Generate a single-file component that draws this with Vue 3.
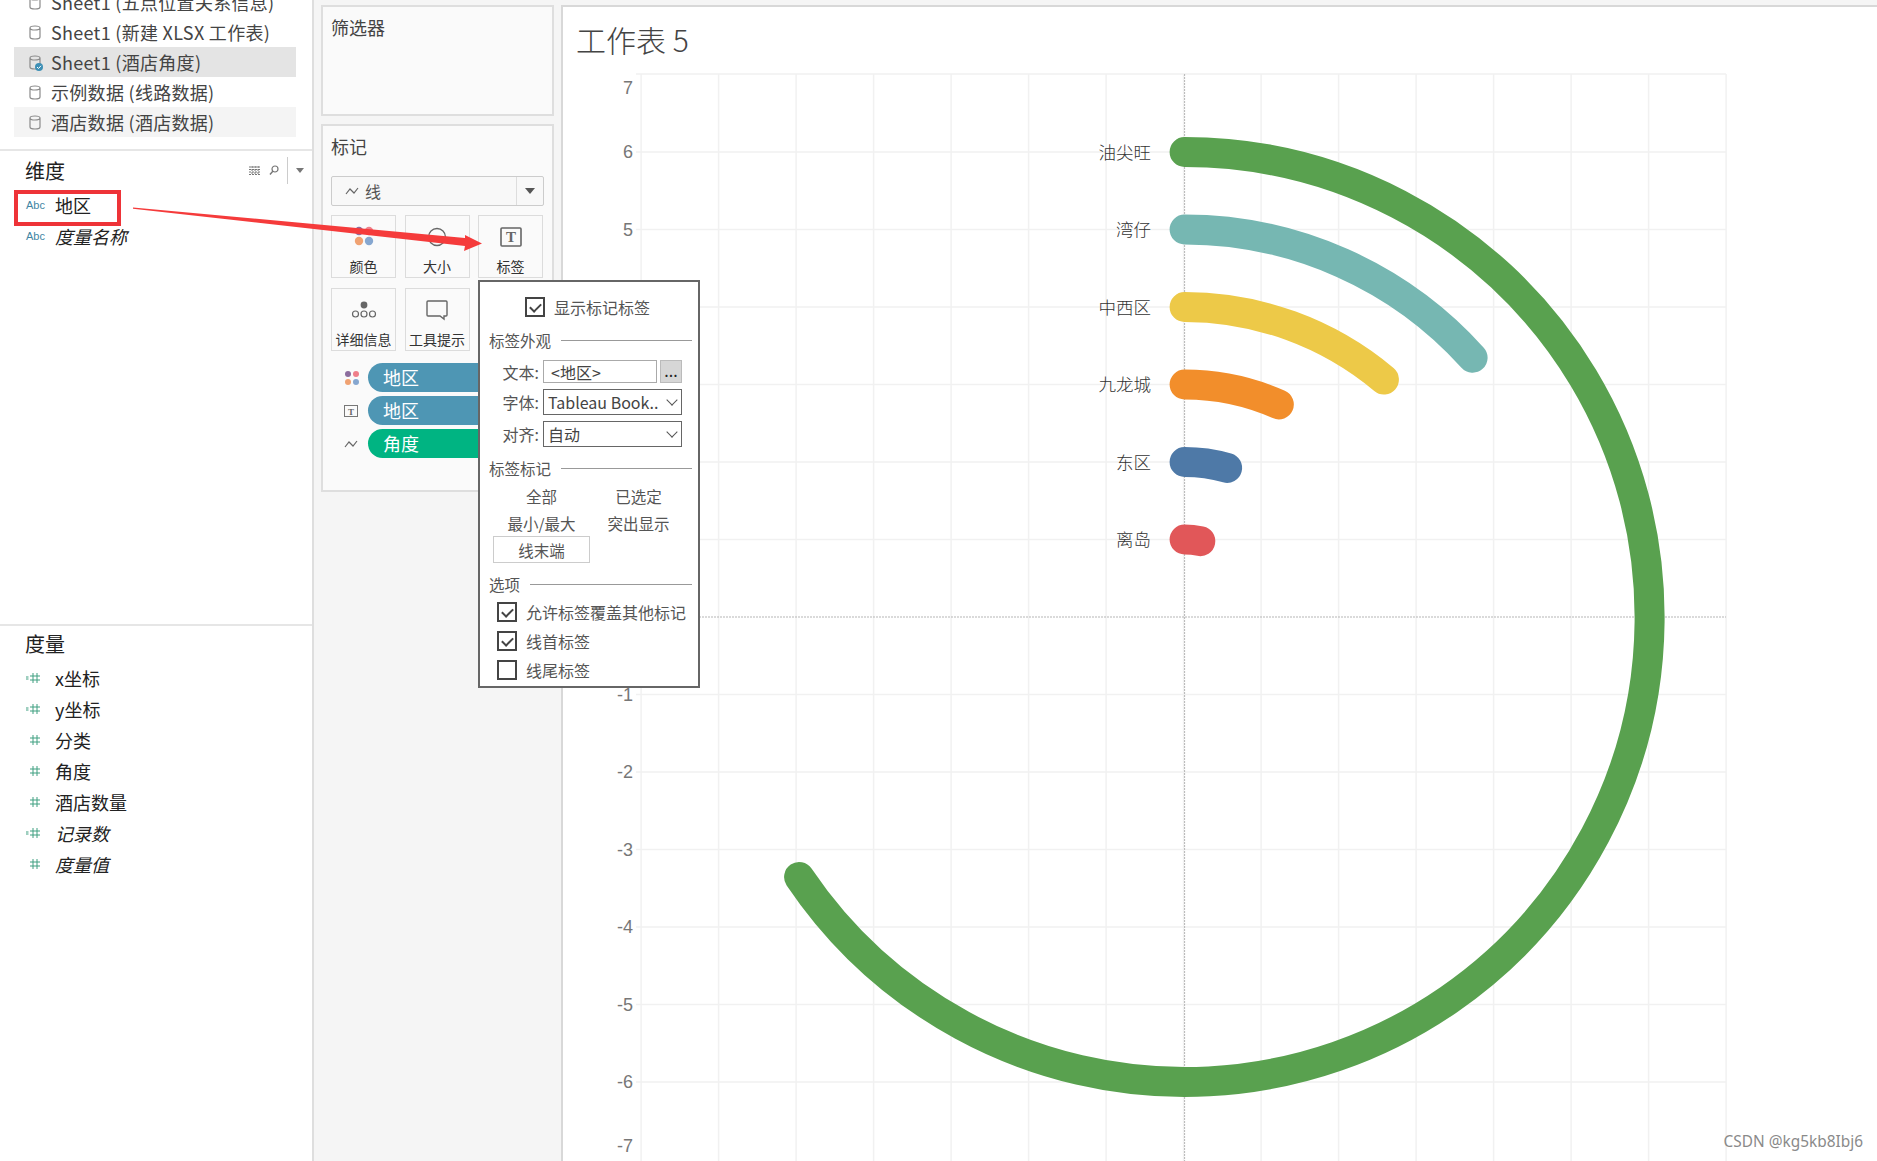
<script setup>
  const sources = [
    { name: 'Sheet1 (五点位置关系信息)' },
    { name: 'Sheet1 (新建 XLSX 工作表)' },
    { name: 'Sheet1 (酒店角度)', state: 'active' },
    { name: '示例数据 (线路数据)' },
    { name: '酒店数据 (酒店数据)', state: 'hover' },
  ]

  const measures = [
    { name: 'x坐标', calc: true },
    { name: 'y坐标', calc: true },
    { name: '分类' },
    { name: '角度' },
    { name: '酒店数量' },
    { name: '记录数', calc: true, italic: true },
    { name: '度量值', italic: true },
  ]

  // chart geometry, in page pixels
  const cx = 1184.6
  const cy = 617
  const unit = 77.5
  const originX = 563
  const originY = 67

  const yTicks = []
  for (let v = 7; v >= -7; v--) yTicks.push(v)
  const xLines = []
  for (let i = 0; i < 15; i++) xLines.push(641.1 + i * unit)

  const tickY = v => cy - v * unit
  // the two outer labels are pushed inside the plot area
  const tickLabelY = v => (v === 7 ? 88 : v === -7 ? 1146 : tickY(v))

  const arcs = [
    { label: '油尖旺', r: 6, angle: 236, color: '#59a14f' },
    { label: '湾仔', r: 5, angle: 48, color: '#76b7b2' },
    { label: '中西区', r: 4, angle: 40, color: '#edc948' },
    { label: '九龙城', r: 3, angle: 23.9, color: '#f28e2b' },
    { label: '东区', r: 2, angle: 15.9, color: '#4e79a7' },
    { label: '离岛', r: 1, angle: 11.7, color: '#e15759' },
  ].map(a => {
    const R = a.r * unit
    const rad = (a.angle * Math.PI) / 180
    const ex = cx + R * Math.sin(rad)
    const ey = cy - R * Math.cos(rad)
    const large = a.angle > 180 ? 1 : 0
    return {
      ...a,
      y: cy - R,
      d: `M${cx} ${cy - R}A${R} ${R} 0 ${large} 1 ${ex.toFixed(1)} ${ey.toFixed(1)}`,
    }
  })
</script>

<template>
  <div class="app">
    <aside class="sidebar">
      <ul class="sources">
        <li v-for="s in sources" :key="s.name" class="source" :class="s.state">
          <svg class="db" width="12" height="15" viewBox="0 0 12 15">
            <path d="M1 3v9c0 1.2 2 2 5 2s5-.8 5-2V3M1 3c0-1.2 2-2 5-2s5 .8 5 2-2 2-5 2-5-.8-5-2z" fill="none" stroke="#8a8a8a" stroke-width="1.2" />
            <template v-if="s.state === 'active'">
              <circle cx="10" cy="12" r="4" fill="#3d8fb5" />
              <path d="M8 12l1.5 1.5L12 10.8" fill="none" stroke="#fff" stroke-width="1" />
            </template>
          </svg>
          <span>{{ s.name }}</span>
        </li>
      </ul>

      <section class="fields dims">
        <header class="fields-head">
          <h3>维度</h3>
          <div class="tools">
            <svg width="12" height="9" viewBox="0 0 12 9">
              <path d="M0 1h12M0 3.5h12M0 6h12M0 8.5h12M3 0v9M6 0v9M9 0v9" stroke="#777" stroke-width="1" stroke-dasharray="2 1" fill="none" />
            </svg>
            <svg width="10" height="10" viewBox="0 0 10 10">
              <circle cx="6" cy="4" r="3" fill="none" stroke="#777" stroke-width="1.2" />
              <path d="M4 6L1 9.5" stroke="#777" stroke-width="1.4" />
            </svg>
            <i class="tool-sep"></i>
            <i class="tool-caret"></i>
          </div>
        </header>
        <div class="field"><span class="abc">Abc</span><span>地区</span></div>
        <div class="field"><span class="abc">Abc</span><em>度量名称</em></div>
        <div class="red-box"></div>
      </section>

      <section class="fields measures">
        <header class="fields-head"><h3>度量</h3></header>
        <div v-for="m in measures" :key="m.name" class="field">
          <svg class="hash" width="16" height="12" viewBox="0 0 16 12">
            <path v-if="m.calc" d="M0 5h2.5M0 7h2.5" stroke="#3f9f80" stroke-width="1" />
            <path d="M7 1v10M11 1v10M4 4h10M4 8h10" stroke="#3f9f80" stroke-width="1" />
          </svg>
          <em v-if="m.italic">{{ m.name }}</em>
          <span v-else>{{ m.name }}</span>
        </div>
      </section>
    </aside>

    <div class="shelves">
      <section class="card filters"><h4>筛选器</h4></section>
      <section class="card marks">
        <h4>标记</h4>
        <div class="mark-type">
          <svg width="14" height="10" viewBox="0 0 14 10">
            <path d="M1 8l4-5 4 4 4-5" fill="none" stroke="#666" stroke-width="1.2" />
          </svg>
          <span>线</span>
          <i class="type-caret"></i>
        </div>
        <div class="mark-grid">
          <div class="mark-btn">
            <svg width="30" height="30" viewBox="0 0 30 30">
              <circle cx="10" cy="9" r="4.2" fill="#8c6d9e" />
              <circle cx="20" cy="9" r="4.2" fill="#ef7f8a" />
              <circle cx="10" cy="19" r="4.2" fill="#f0a272" />
              <circle cx="20" cy="19" r="4.2" fill="#86a7d0" />
            </svg>
            <span>颜色</span>
          </div>
          <div class="mark-btn">
            <svg width="30" height="30" viewBox="0 0 30 30">
              <circle cx="15" cy="15" r="8.5" fill="none" stroke="#666" stroke-width="1.3" />
            </svg>
            <span>大小</span>
          </div>
          <div class="mark-btn">
            <svg width="30" height="30" viewBox="0 0 30 30">
              <rect x="5" y="6" width="20" height="18" rx="1" fill="none" stroke="#666" stroke-width="1.6" />
              <text x="15" y="20" text-anchor="middle" class="t-glyph">T</text>
            </svg>
            <span>标签</span>
          </div>
          <div class="mark-btn">
            <svg width="30" height="30" viewBox="0 0 30 30">
              <circle cx="15" cy="10" r="3.4" fill="#666" />
              <circle cx="6.5" cy="19" r="3" fill="none" stroke="#666" stroke-width="1.2" />
              <circle cx="15" cy="19" r="3" fill="none" stroke="#666" stroke-width="1.2" />
              <circle cx="23.5" cy="19" r="3" fill="none" stroke="#666" stroke-width="1.2" />
            </svg>
            <span class="small">详细信息</span>
          </div>
          <div class="mark-btn">
            <svg width="30" height="30" viewBox="0 0 30 30">
              <path d="M6 6h18a1 1 0 0 1 1 1v13a1 1 0 0 1-1 1h-2v3l-4-3H6a1 1 0 0 1-1-1V7a1 1 0 0 1 1-1z" fill="none" stroke="#666" stroke-width="1.4" />
            </svg>
            <span class="small">工具提示</span>
          </div>
        </div>
        <div class="pill-row">
          <svg width="16" height="16" viewBox="0 0 16 16">
            <circle cx="4" cy="4" r="3" fill="#8c6d9e" />
            <circle cx="12" cy="4" r="3" fill="#ef7f8a" />
            <circle cx="4" cy="12" r="3" fill="#f0a272" />
            <circle cx="12" cy="12" r="3" fill="#86a7d0" />
          </svg>
          <span class="pill blue">地区</span>
        </div>
        <div class="pill-row">
          <svg width="14" height="12" viewBox="0 0 14 12">
            <rect x=".5" y=".5" width="13" height="11" fill="none" stroke="#777" />
            <text x="7" y="9.5" text-anchor="middle" class="t-small">T</text>
          </svg>
          <span class="pill blue">地区</span>
        </div>
        <div class="pill-row">
          <svg width="14" height="10" viewBox="0 0 14 10">
            <path d="M1 8l4-5 4 4 4-5" fill="none" stroke="#666" stroke-width="1.2" />
          </svg>
          <span class="pill green">角度</span>
        </div>
      </section>
    </div>

    <main class="sheet">
      <h1 class="sheet-title">工作表 5</h1>
      <svg class="chart" width="1314" height="1094" viewBox="0 0 1314 1094">
        <g :transform="`translate(${-originX} ${-originY})`">
          <line v-for="x in xLines" :key="x" :x1="x" :x2="x" y1="74" y2="1161" class="grid" />
          <line x1="636" x2="1726" y1="74" y2="74" class="grid" />
          <template v-for="v in yTicks" :key="v">
            <line v-if="Math.abs(v) < 7" x1="636" x2="1726" :y1="tickY(v)" :y2="tickY(v)" :class="v === 0 ? 'zero' : 'grid'" />
            <text x="633" :y="tickLabelY(v)" class="tick">{{ v }}</text>
          </template>
          <line :x1="cx" :x2="cx" y1="74" y2="1161" class="zero" />
          <g v-for="a in arcs" :key="a.label">
            <path :d="a.d" fill="none" :stroke="a.color" stroke-width="30" stroke-linecap="round" />
            <text x="1151" :y="a.y - 1" class="arc-label">{{ a.label }}</text>
          </g>
        </g>
      </svg>
      <span class="watermark">CSDN @kg5kb8Ibj6</span>
    </main>

    <!-- popup of the label card -->
    <div class="popup">
      <label class="check head-check"><i class="box on"></i>显示标记标签</label>
      <div class="legend"><span>标签外观</span></div>
      <div class="form">
        <span>文本:</span>
        <div class="text-row">
          <div class="input">&lt;地区&gt;</div>
          <div class="more">...</div>
        </div>
        <span>字体:</span>
        <div class="select">Tableau Book..<i class="chev"></i></div>
        <span>对齐:</span>
        <div class="select">自动<i class="chev"></i></div>
      </div>
      <div class="legend second"><span>标签标记</span></div>
      <div class="scope">
        <span>全部</span><span>已选定</span>
        <span>最小/最大</span><span>突出显示</span>
        <span class="scope-on">线末端</span>
      </div>
      <div class="legend third"><span>选项</span></div>
      <div class="checks">
        <label class="check"><i class="box on"></i>允许标签覆盖其他标记</label>
        <label class="check"><i class="box on"></i>线首标签</label>
        <label class="check"><i class="box"></i>线尾标签</label>
      </div>
    </div>

    <svg class="arrow" width="360" height="60" viewBox="125 200 360 60">
      <polygon points="133,207.5 465,238 465,235 482,243.5 464,251 465,246 133,208.8" fill="#f53b3b" />
    </svg>
  </div>
</template>

<style>
  html,
  body {
    margin: 0;
    background: #f5f5f5;
  }
</style>

<style scoped>
  .app {
    position: relative;
    display: flex;
    width: 1877px;
    height: 1161px;
    overflow: hidden;
    background: #f5f5f5;
    color: #333;
    font-family: "Noto Sans CJK SC", "Noto Sans", sans-serif;
  }

  /* left data pane */
  .sidebar {
    flex: none;
    width: 312px;
    background: #fff;
    border-right: 2px solid #dedede;
  }
  .sources {
    height: 149px;
    margin: 0;
    padding: 0;
    list-style: none;
    border-bottom: 2px solid #e6e6e6;
    box-sizing: content-box;
    overflow: hidden;
  }
  .source {
    display: flex;
    align-items: center;
    gap: 10px;
    box-sizing: border-box;
    width: 282px;
    height: 30px;
    margin-left: 14px;
    padding-left: 15px;
    font-size: 18px;
    letter-spacing: .3px;
    color: #444;
    white-space: nowrap;
  }
  .source:first-child {
    margin-top: -13px;
  }
  .source.active {
    background: #e4e4e4;
  }
  .source.hover {
    background: #f4f4f4;
  }
  .db {
    flex: none;
    overflow: visible;
  }

  .fields {
    position: relative;
  }
  .dims {
    height: 473px;
    border-bottom: 2px solid #e6e6e6;
  }
  .fields-head {
    display: flex;
    align-items: center;
    justify-content: space-between;
    height: 38px;
    padding: 0 8px 0 25px;
  }
  .measures .fields-head {
    height: 34px;
    margin-bottom: 2px;
  }
  h3 {
    margin: 0;
    font-size: 20px;
    font-weight: 400;
    color: #222;
  }
  .tools {
    display: flex;
    align-items: center;
    gap: 8px;
  }
  .tool-sep {
    width: 1px;
    height: 27px;
    background: #ccc;
  }
  .tool-caret {
    border: 4px solid transparent;
    border-top: 5px solid #777;
    border-bottom: 0;
  }
  .field {
    display: flex;
    align-items: center;
    height: 31px;
    padding-left: 26px;
    font-size: 18px;
    color: #222;
  }
  .field em {
    font-style: italic;
  }
  .abc {
    width: 29px;
    flex: none;
    font-family: "Liberation Sans", sans-serif;
    font-size: 11px;
    color: #3f86a4;
  }
  .hash {
    flex: none;
    width: 16px;
    margin-right: 13px;
  }
  .red-box {
    position: absolute;
    left: 14px;
    top: 39px;
    box-sizing: border-box;
    width: 107px;
    height: 36px;
    border: 4px solid #ee3338;
  }

  /* filters + marks */
  .shelves {
    flex: none;
    width: 247px;
    padding: 5px 0 0 7px;
    box-sizing: border-box;
  }
  .card {
    box-sizing: border-box;
    width: 233px;
    background: #fafafa;
    border: 2px solid #dedede;
  }
  .card h4 {
    margin: 0;
    font-size: 18px;
    font-weight: 400;
    color: #444;
  }
  .filters {
    height: 111px;
    padding: 7px 8px;
  }
  .marks {
    position: relative;
    height: 368px;
    margin-top: 8px;
    padding: 7px 8px;
  }
  .mark-type {
    display: flex;
    align-items: center;
    gap: 6px;
    box-sizing: border-box;
    height: 30px;
    margin-top: 17px;
    padding-left: 13px;
    background: #f8f8f8;
    border: 1px solid #ccc;
    border-radius: 2px;
    font-size: 16px;
    color: #555;
    position: relative;
  }
  .type-caret {
    position: absolute;
    right: 0;
    top: 0;
    bottom: 0;
    width: 26px;
    border-left: 1px solid #ddd;
  }
  .type-caret::after {
    content: "";
    position: absolute;
    left: 8px;
    top: 11px;
    border: 5px solid transparent;
    border-top: 6px solid #555;
    border-bottom: 0;
  }
  .mark-grid {
    display: grid;
    grid-template-columns: repeat(3, 65px);
    grid-auto-rows: 63px;
    column-gap: 8.5px;
    row-gap: 10px;
    margin-top: 9px;
  }
  .mark-btn {
    display: flex;
    flex-direction: column;
    align-items: center;
    box-sizing: border-box;
    padding-top: 6px;
    background: #fafafa;
    border: 1px solid #dcdcdc;
    font-size: 14px;
    line-height: 20px;
    color: #333;
  }
  .mark-btn svg {
    margin-bottom: 4px;
  }
  .mark-btn .small {
    white-space: nowrap;
  }
  .t-glyph {
    font: 700 15px "Liberation Serif", serif;
    fill: #666;
  }
  .t-small {
    font: 700 9px "Liberation Serif", serif;
    fill: #666;
  }
  .pill-row {
    display: flex;
    align-items: center;
    height: 29px;
    margin-top: 4px;
    position: relative;
    padding-left: 37px;
  }
  .mark-grid + .pill-row {
    margin-top: 12px;
  }
  .pill-row svg {
    position: absolute;
    left: 13px;
    top: 50%;
    transform: translateY(-50%);
  }
  .pill {
    box-sizing: border-box;
    width: 140px;
    height: 29px;
    padding-left: 15px;
    border-radius: 15px 0 0 15px;
    font-size: 18px;
    line-height: 28px;
    color: #fff;
  }
  .pill.blue {
    background: #4e96b4;
  }
  .pill.green {
    background: #00b482;
  }

  /* worksheet */
  .sheet {
    position: relative;
    flex: 1;
    margin-top: 5px;
    background: #fff;
    border-left: 2px solid #d8d8d8;
    border-top: 2px solid #d8d8d8;
    min-width: 0;
  }
  .sheet-title {
    height: 60px;
    margin: 0;
    padding-left: 13px;
    font-size: 30px;
    font-weight: 300;
    line-height: 64px;
    color: #444;
    box-sizing: border-box;
  }
  .chart {
    display: block;
  }
  .grid {
    stroke: #f1f1f1;
    stroke-width: 1.5;
  }
  .zero {
    stroke: #b5b5b5;
    stroke-width: 1;
    stroke-dasharray: 2 1;
  }
  .tick {
    font-size: 18px;
    font-weight: 300;
    font-family: "Liberation Sans", sans-serif;
    fill: #777;
    text-anchor: end;
    dominant-baseline: central;
  }
  .arc-label {
    font-size: 17.5px;
    font-weight: 300;
    fill: #333;
    text-anchor: end;
    dominant-baseline: central;
  }
  .watermark {
    position: absolute;
    right: 14px;
    bottom: 9px;
    font-family: "Noto Sans", sans-serif;
    font-size: 15.4px;
    color: #8a8a8a;
  }

  /* label popup */
  .popup {
    position: absolute;
    left: 478px;
    top: 280px;
    box-sizing: border-box;
    width: 222px;
    height: 408px;
    padding: 15px 6px 0 9px;
    background: #fff;
    border: 2px solid #666;
    font-size: 16px;
    color: #555;
  }
  .check {
    display: flex;
    align-items: center;
    gap: 9px;
    height: 20px;
    white-space: nowrap;
  }
  .head-check {
    margin-left: 36px;
  }
  .box {
    position: relative;
    flex: none;
    box-sizing: border-box;
    width: 20px;
    height: 20px;
    border: 2px solid #444;
    background: #fff;
  }
  .box.on::after {
    content: "";
    position: absolute;
    left: 3px;
    top: 1px;
    width: 9px;
    height: 5px;
    transform: translate(0, 3px) rotate(-45deg);
    border-left: 2px solid #444;
    border-bottom: 2px solid #444;
  }
  .legend {
    display: flex;
    align-items: center;
    gap: 10px;
    height: 20px;
    margin-top: 13px;
    font-size: 15.5px;
    white-space: nowrap;
  }
  .legend::after {
    content: "";
    flex: 1;
    height: 1px;
    background: #999;
  }
  .legend.second {
    margin-top: 11px;
  }
  .legend.third {
    margin-top: 11px;
  }
  .form {
    display: grid;
    grid-template-columns: 41px 139px;
    grid-template-rows: 23px 26px 26px;
    column-gap: 4px;
    row-gap: 6px;
    align-items: center;
    margin-top: 10px;
    margin-left: 9px;
    text-align: right;
    white-space: nowrap;
  }
  .form > span {
    margin-left: -8px;
  }
  .text-row {
    display: flex;
    height: 23px;
    gap: 3px;
  }
  .input {
    box-sizing: border-box;
    flex: 1;
    padding-left: 7px;
    border: 1px solid #aaa;
    line-height: 22px;
    text-align: left;
    color: #444;
  }
  .more {
    box-sizing: border-box;
    width: 22px;
    background: #d6d6d6;
    border: 1px solid #bbb;
    line-height: 18px;
    text-align: center;
    color: #222;
  }
  .select {
    position: relative;
    box-sizing: border-box;
    height: 26px;
    padding-left: 4px;
    border: 1px solid #666;
    line-height: 25px;
    text-align: left;
    color: #444;
  }
  .chev {
    position: absolute;
    right: 5px;
    top: 6px;
    width: 7px;
    height: 7px;
    transform: rotate(45deg);
    border-right: 1px solid #555;
    border-bottom: 1px solid #555;
  }
  .scope {
    display: grid;
    grid-template-columns: 97px 97px;
    grid-template-rows: 27px 26px 27px;
    margin-top: 5px;
    margin-left: 4px;
    text-align: center;
    line-height: 26px;
    font-size: 15.5px;
    white-space: nowrap;
  }
  .scope-on {
    box-sizing: border-box;
    border: 1px solid #ccc;
  }
  .checks {
    display: flex;
    flex-direction: column;
    gap: 9px;
    margin-top: 8px;
    margin-left: 8px;
  }

  /* hand drawn arrow over the screenshot */
  .arrow {
    position: absolute;
    left: 125px;
    top: 200px;
    pointer-events: none;
  }
</style>
